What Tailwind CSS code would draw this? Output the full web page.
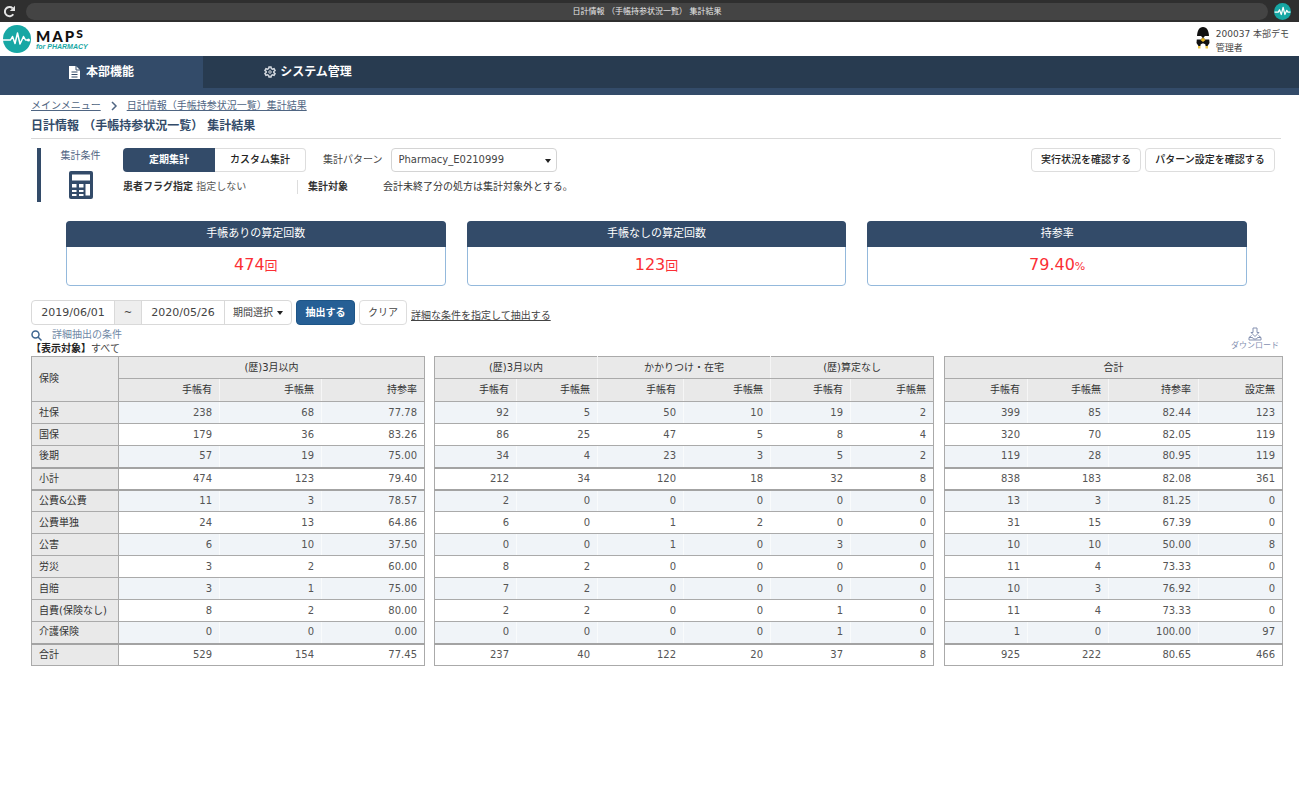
<!DOCTYPE html>
<html lang="ja">
<head>
<meta charset="utf-8">
<meta name="viewport" content="width=device-width, initial-scale=1">
<title>日計情報 （手帳持参状況一覧） 集計結果</title>
<script src="https://cdn.jsdelivr.net/npm/@tailwindcss/browser@4"></script>
</head>
<body class="bg-white pr-[9px] font-['DejaVu_Sans','Noto_Sans_CJK_JP',sans-serif] text-[10px] leading-[14px] text-[#444]">

<!-- Browser bar -->
<div class="flex h-[22px] items-center gap-[10px] bg-[#2f2f2f] pr-2 pl-[3px]">
  <button type="button" aria-label="再読み込み" class="h-[13px] w-[13px] shrink-0 text-[#e4e4e4]">
    <svg viewBox="0 0 13 13" class="h-full w-full" fill="none" stroke="currentColor" stroke-width="2"><path d="M10.3 9.2A4.6 4.6 0 1 1 9.6 3.2"/><path d="M12 .8V6H6.8Z" fill="currentColor" stroke="none"/></svg>
  </button>
  <div class="h-[17px] min-w-0 flex-1 rounded-full bg-[#444] text-center text-[8px] leading-[17px] text-[#e8e8e8]">日計情報 （手帳持参状況一覧） 集計結果</div>
  <svg viewBox="0 0 28 28" class="-ml-1 h-[17px] w-[17px] shrink-0"><circle cx="14" cy="14" r="14" fill="#17a7a4"/><path d="M1 15h6l2-4 3 8 3-12 3 12 3-7 2 3h4" fill="none" stroke="#fff" stroke-width="2" stroke-linejoin="round"/></svg>
</div>

<!-- Header -->
<header class="flex h-[34px] items-center justify-between pr-[10px] pl-[3px]">
  <a href="#" class="flex items-center gap-[5px]" aria-label="MAPs for PHARMACY">
    <svg viewBox="0 0 28 28" class="h-7 w-7"><circle cx="14" cy="14" r="14" fill="#17a7a4"/><path d="M0 15h7.500l2-3.500 2.500 7L14.500 8l2.500 11 3.500-7.500L22.500 15H26" fill="none" stroke="#fff" stroke-width="1.500" stroke-linejoin="round"/><circle cx="25.500" cy="15" r="1.500" fill="#fff"/></svg>
    <span class="flex flex-col pt-px font-['Lato','Liberation_Sans',sans-serif]">
      <span class="flex items-start gap-[2px] text-[15px] leading-[14px] font-black text-[#111]"><span>M</span><span>A</span><span>P</span><span class="text-[12px] leading-[10px]">S</span></span>
      <span class="font-['Liberation_Sans',sans-serif] text-[7px] leading-[8px] font-bold text-[#17a7a4] italic">for PHARMACY</span>
    </span>
  </a>
  <div class="flex items-start gap-[6px] pt-[4px]">
    <svg viewBox="0 0 14 22" class="h-[22px] w-[14px]">
      <path d="M1 10C1 4 3 0 7 0s6 4 6 10l.5 6-2 3h-9l-2-3Z" fill="#111"/>
      <path d="M0 9h5l1.500 1.500L5 12.500H0ZM14 9H9l-1.500 1.500L9 12.500h5Z" fill="#fff"/>
      <path d="M7 10.500 9.500 13 7 15 4.500 13Z" fill="#e6b422"/>
      <path d="M4.500 18C5 16 9 16 9.500 18V20h-5Z" fill="#fff"/>
      <path d="M2 19h2.500v2.500H2ZM9.500 19H12v2.500H9.500Z" fill="#edc84a"/>
    </svg>
    <p class="text-[9px] leading-[14px]">200037 本部デモ<br>管理者</p>
  </div>
</header>

<!-- Main navigation -->
<nav class="flex h-[39px] border-b-[7px] border-[#334b69] bg-[#283b50] text-[12px] font-bold text-white">
  <a href="#" class="flex w-[203px] items-center justify-center gap-[6px] bg-[#334b69]">
    <svg viewBox="0 0 11 13" class="h-[13px] w-[11px]"><path d="M0 0h7l4 4v9H0Z" fill="#fff"/><path d="M7 0v4h4" fill="none" stroke="#334b69"/><path d="M2.500 6h6M2.500 8.500h6M2.500 11h6" stroke="#334b69"/></svg>
    本部機能
  </a>
  <a href="#" class="flex w-[210px] items-center justify-center gap-1">
    <svg viewBox="0 0 24 24" class="h-3 w-3" fill="none" stroke="#d5dae0" stroke-width="3"><path d="M10 2h4l.7 3.200 2.300 1.300 3.100-1 2 3.500-2.400 2.100v2l2.400 2.100-2 3.500-3.100-1-2.300 1.300L14 22h-4l-.7-3.200L7 17.500l-3.100 1-2-3.500 2.400-2.100v-2L1.900 9l2-3.500 3.100 1 2.300-1.300Z"/><circle cx="12" cy="12" r="2.500" stroke-width="2"/></svg>
    システム管理
  </a>
</nav>

<main class="pt-1 pr-[18px] pl-[31px]">
  <div class="flex items-center gap-[9px] text-[#4f6582]">
    <a href="#" class="underline">メインメニュー</a>
    <svg viewBox="0 0 8 10" class="h-[10px] w-2" fill="none" stroke="currentColor" stroke-width="1.500"><path d="m2 1 4 4-4 4"/></svg>
    <a href="#" class="underline">日計情報（手帳持参状況一覧）集計結果</a>
  </div>
  <h1 class="mt-[5px] border-b border-[#d9d9d9] pb-[3px] text-[12px] leading-[17px] font-bold text-[#334b69]">日計情報 （手帳持参状況一覧） 集計結果</h1>

  <!-- Aggregation conditions -->
  <section class="mt-[9px] flex items-start justify-between pr-[6px] pl-[6px]">
    <div class="flex">
      <div class="flex h-[54px] w-[66px] flex-col items-center border-l-4 border-[#334b69] pt-px pl-[17px] text-[#4f6582]">
        <span class="whitespace-nowrap">集計条件</span>
        <svg viewBox="0 0 24 28" class="mt-2 h-7 w-6"><rect width="24" height="28" rx="2" fill="#334b69"/><path d="M3 3.500h18v6H3ZM3 13h4.500v3.500H3ZM10 13h4.500v3.500H10ZM16.500 13H21v3.500h-4.500ZM3 19h4.500v2H3ZM10 19h4.500v2H10ZM16.500 16.500H21v8h-4.500ZM3 23h4.500v2H3ZM10 23h4.500v2H10Z" fill="#fff"/></svg>
      </div>
      <div class="pl-5">
        <div class="flex items-center">
          <button type="button" class="h-6 w-[92px] rounded-l-sm bg-[#334b69] font-bold text-white">定期集計</button>
          <button type="button" class="h-6 w-[91px] rounded-r-sm border border-l-0 border-[#ddd] font-medium text-[#222]">カスタム集計</button>
          <label for="pattern" class="pr-2 pl-[17px]">集計パターン</label>
          <div class="relative">
            <select id="pattern" class="h-6 w-[166px] appearance-none rounded-sm border border-[#d4d4d4] bg-white pl-[7px]"><option>Pharmacy_E0210999</option></select>
            <svg viewBox="0 0 6 4" class="pointer-events-none absolute top-[11px] right-[6px] h-1 w-[6px]" fill="#222"><path d="M0 0h6L3 4Z"/></svg>
          </div>
        </div>
        <div class="mt-2 flex text-[#333]">
          <p class="w-[174px]"><b>患者フラグ指定</b> <span class="text-[#555]">指定しない</span></p>
          <p class="w-[86px] border-l border-[#ddd] pl-[10px]"><b>集計対象</b></p>
          <p>会計未終了分の処方は集計対象外とする。</p>
        </div>
      </div>
    </div>
    <div class="flex gap-1 font-medium text-[#222]">
      <button type="button" class="h-6 w-[110px] rounded-sm border border-[#ddd]">実行状況を確認する</button>
      <button type="button" class="h-6 w-[130px] rounded-sm border border-[#ddd]">パターン設定を確認する</button>
    </div>
  </section>

  <!-- Summary cards -->
  <section class="mt-[19px] grid grid-cols-3 gap-[21px] pr-[34px] pl-[35px] text-center">
    <div class="rounded-sm border border-[#94b9dc]">
      <h2 class="-m-px rounded-t-sm bg-[#334b69] py-1 text-[11px] leading-[18px] text-white">手帳ありの算定回数</h2>
      <p class="py-[7px] text-[16px] leading-[23px] text-[#fb2f35]">474<span class="text-[13px]">回</span></p>
    </div>
    <div class="rounded-sm border border-[#94b9dc]">
      <h2 class="-m-px rounded-t-sm bg-[#334b69] py-1 text-[11px] leading-[18px] text-white">手帳なしの算定回数</h2>
      <p class="py-[7px] text-[16px] leading-[23px] text-[#fb2f35]">123<span class="text-[13px]">回</span></p>
    </div>
    <div class="rounded-sm border border-[#94b9dc]">
      <h2 class="-m-px rounded-t-sm bg-[#334b69] py-1 text-[11px] leading-[18px] text-white">持参率</h2>
      <p class="py-[7px] text-[16px] leading-[23px] text-[#fb2f35]">79.40<span class="text-[11px]">%</span></p>
    </div>
  </section>

  <!-- Period filter -->
  <form class="mt-[14px] flex items-center">
    <div class="flex h-[25px] rounded-sm border border-[#d9d9d9]">
      <input type="text" aria-label="開始日" value="2019/06/01" class="w-[82px] text-center text-[11px]">
      <span class="w-7 border-x border-[#d9d9d9] bg-[#eee] text-center leading-[23px]">~</span>
      <input type="text" aria-label="終了日" value="2020/05/26" class="w-[82px] text-center text-[11px]">
      <button type="button" class="flex w-[67px] items-center justify-center gap-1 border-l border-[#d9d9d9]">期間選択<svg viewBox="0 0 6 4" class="h-1 w-[6px]" fill="#222"><path d="M0 0h6L3 4Z"/></svg></button>
    </div>
    <button type="button" class="ml-1 h-[25px] w-[59px] rounded-sm border border-[#1d5587] bg-[#265f95] font-bold text-white">抽出する</button>
    <button type="button" class="ml-1 h-[25px] w-12 rounded-sm border border-[#ddd]">クリア</button>
    <a href="#" class="ml-1 pt-[6px] underline">詳細な条件を指定して抽出する</a>
  </form>

  <div class="mt-[2px] flex items-end justify-between">
    <div>
      <p class="flex items-center gap-[10px] text-[#7088a5]">
        <svg viewBox="0 0 11 11" class="h-[11px] w-[11px]" fill="none" stroke="#3f6690" stroke-width="1.500"><circle cx="4.500" cy="4.500" r="3.500"/><path d="m7 7 3.500 3.500"/></svg>
        詳細抽出の条件
      </p>
      <p><b class="text-[#222]">【表示対象】</b>すべて</p>
    </div>
    <a href="#" class="mb-[6px] flex flex-col items-center pr-[2px] text-[8px] leading-[9px] text-[#8490b0]">
      <svg viewBox="0 0 14 14" class="h-[14px] w-[14px]" fill="none" stroke="currentColor"><path d="M5 1h4v4.500h2L7 9.500 3 5.500h2Z"/><path d="M3.500 8.500 1 10.500v2.500h12v-2.500l-2.500-2M1 10.500h3.500L5.500 12h3l1-1.500H13"/></svg>
      ダウンロード
    </a>
  </div>

  <!-- Result table -->
  <table class="w-full table-fixed border-collapse text-right text-[#555]">
    <colgroup>
      <col class="w-[87px]"><col class="w-[101px]"><col class="w-[102px]"><col class="w-[103px]"><col class="w-[10px]">
      <col class="w-[82px]"><col class="w-[81px]"><col class="w-[86px]"><col class="w-[87px]"><col class="w-[80px]"><col class="w-[83px]"><col class="w-[11px]">
      <col class="w-[83px]"><col class="w-[81px]"><col class="w-[90px]"><col class="w-[84px]">
    </colgroup>
    <thead class="text-[#333]">
      <tr class="h-[22px]">
        <th scope="col" rowspan="2" class="border border-[#aaa] bg-[#e9e9e9] px-[7px] text-left font-normal">保険</th>
        <th scope="colgroup" colspan="3" class="border border-[#aaa] bg-[#e9e9e9] text-center font-normal">(歴)3月以内</th>
        <td></td>
        <th scope="colgroup" colspan="2" class="border border-r-[#f5f5f5] border-y-[#aaa] border-l-[#aaa] bg-[#e9e9e9] text-center font-normal">(歴)3月以内</th>
        <th scope="colgroup" colspan="2" class="border border-x-[#f5f5f5] border-y-[#aaa] bg-[#e9e9e9] text-center font-normal">かかりつけ・在宅</th>
        <th scope="colgroup" colspan="2" class="border border-[#aaa] bg-[#e9e9e9] text-center font-normal">(歴)算定なし</th>
        <td></td>
        <th scope="colgroup" colspan="4" class="border border-[#aaa] bg-[#e9e9e9] text-center font-normal">合計</th>
      </tr>
      <tr id="subhead" class="h-[23px]"></tr>
    </thead>
    <tbody id="rows"></tbody>
  </table>
</main>

<script>
const heads = ['手帳有','手帳無','持参率',null,'手帳有','手帳無','手帳有','手帳無','手帳有','手帳無',null,'手帳有','手帳無','持参率','設定無'];
const data = [
  '社保 238 68 77.78 | 92 5 50 10 19 2 | 399 85 82.44 123',
  '国保 179 36 83.26 | 86 25 47 5 8 4 | 320 70 82.05 119',
  '後期 57 19 75.00 | 34 4 23 3 5 2 | 119 28 80.95 119',
  '小計 474 123 79.40 | 212 34 120 18 32 8 | 838 183 82.08 361',
  '公費&amp;公費 11 3 78.57 | 2 0 0 0 0 0 | 13 3 81.25 0',
  '公費単独 24 13 64.86 | 6 0 1 2 0 0 | 31 15 67.39 0',
  '公害 6 10 37.50 | 0 0 1 0 3 0 | 10 10 50.00 8',
  '労災 3 2 60.00 | 8 2 0 0 0 0 | 11 4 73.33 0',
  '自賠 3 1 75.00 | 7 2 0 0 0 0 | 10 3 76.92 0',
  '自費(保険なし) 8 2 80.00 | 2 2 0 0 1 0 | 11 4 73.33 0',
  '介護保険 0 0 0.00 | 0 0 0 0 1 0 | 1 0 100.00 97',
  '合計 529 154 77.45 | 237 40 122 20 37 8 | 925 222 80.65 466'
];
// Vertical rules: grey at the outside of each column group, white between columns.
const side = i => {
  const first = [0, 4, 11].includes(i), last = [2, 9, 14].includes(i);
  return first ? 'border-l-[#aaa] border-r-white/60' : last ? 'border-l-white/60 border-r-[#aaa]' : 'border-x-white/60';
};
document.getElementById('subhead').innerHTML = heads.map((h, i) =>
  h ? `<th scope="col" class="border border-y-[#aaa] bg-[#e9e9e9] pr-[7px] font-normal ${side(i)}">${h}</th>` : '<td></td>').join('');
document.getElementById('rows').innerHTML = data.map((line, r) => {
  const [name, ...cells] = line.split(' ');
  const top = [3, 4, 11].includes(r) ? 'border-t-2 border-t-[#a3a3a3]' : 'border-t-[#aaa]';
  const bg = r % 2 ? 'bg-white' : 'bg-[#f0f4f8]';
  return `<tr class="h-[22px]"><th scope="row" class="border border-x-[#aaa] border-b-[#aaa] bg-[#e9e9e9] pl-[7px] text-left font-normal whitespace-nowrap text-[#333] ${top}">${name}</th>` +
    cells.map((c, i) => c === '|' ? '<td></td>' : `<td class="border border-b-[#aaa] pr-[7px] ${bg} ${top} ${side(i)}">${c}</td>`).join('') + '</tr>';
}).join('');
</script>
</body>
</html>
